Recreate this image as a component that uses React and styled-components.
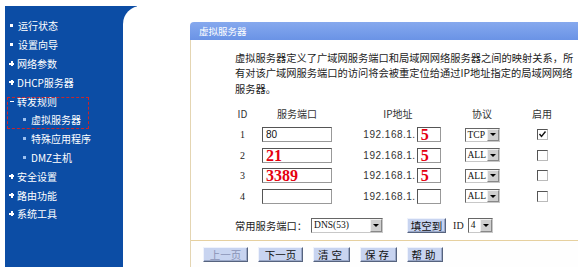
import React from 'react';
import styled, { createGlobalStyle } from 'styled-components';

const Global = createGlobalStyle`
  html, body { margin: 0; padding: 0; background: #fff; }
  body {
    width: 587px; height: 267px; overflow: hidden;
    font-family: "Noto Sans CJK SC", "Noto Sans", sans-serif;
  }
`;

const Page = styled.div`
  display: flex;
  height: 267px;
  box-sizing: border-box;
  padding: 6px 0 0 5px;
`;

const Sidebar = styled.nav`
  flex: none;
  width: 132px;
  height: 261px;
  background: #0c4da5;
  padding-top: 10.6px;
  box-sizing: border-box;
`;

const MenuItem = styled.div`
  display: flex;
  align-items: center;
  height: 18.8px;
  padding-left: ${p => (p.$sub ? 17 : 4)}px;
  color: #fff;
  font-size: 10px;
  white-space: nowrap;
`;

const Bullet = styled.span`
  position: relative;
  flex: none;
  width: 4px;
  height: 4px;
  margin-right: 4px;
  ${p => p.$kind === 'dot' && `
    background: ${p.$light ? '#9cc0f0' : '#fff'};
    width: 3px; height: 3px; margin-right: 5px; margin-left: 1px;
  `}
  ${p => p.$kind === 'plus' && `
    background:
      linear-gradient(#fff, #fff) center / 5px 2px no-repeat,
      linear-gradient(#fff, #fff) center / 2px 5px no-repeat;
    width: 5px; height: 5px; margin-right: 3px;
  `}
  ${p => p.$kind === 'minus' && `
    background: linear-gradient(#fff, #fff) center / 4px 1px no-repeat;
    width: 5px; height: 5px; margin-right: 3px;
  `}
`;

const Marked = styled.div`
  position: relative;
  &::after {
    content: '';
    position: absolute;
    left: 2px;
    top: 4.8px;
    width: 82px;
    height: 32px;
    box-sizing: border-box;
    border: 1px dashed #c8242c;
    pointer-events: none;
  }
`;

const Main = styled.main`
  flex: 1;
  margin-left: -14px;
  background: #fff;
  border-top-left-radius: 18px;
  padding: 16px 0 0 67px;
  box-sizing: border-box;
`;

const Panel = styled.section`
  width: 388px;
  height: 245px;
  display: flex;
  flex-direction: column;
`;

const PanelHeader = styled.div`
  height: 18px;
  flex: none;
  background: linear-gradient(#86a9ee, #6a93e6);
  border-radius: 4px 0 0 0;
  color: #fff;
  font-size: 9.5px;
  line-height: 18px;
  padding-left: 9px;
`;

const PanelBody = styled.div`
  flex: 1;
  display: flex;
  flex-direction: column;
  border-left: 1px solid #e4d5b2;
`;

const Content = styled.div`
  height: 200px;
  box-sizing: border-box;
  padding: 9.75px 0 0 44px;
`;

const Intro = styled.p`
  margin: 0;
  font-size: 10.25px;
  line-height: 15.5px;
  color: #222;
  white-space: nowrap;
`;

const Table = styled.div`
  display: grid;
  grid-template-columns: 15px 94px 108px 60px 60px;
  grid-auto-rows: 20.6px;
  align-items: center;
  justify-items: center;
  margin-top: 7.45px;
  color: #222;
`;

const Th = styled.div`
  font-size: 10px;
  color: #333;
`;

const Num = styled.div`
  font-family: "Liberation Serif", serif;
  font-size: 10px;
  color: #222;
`;

const TextBox = styled.div`
  width: ${p => p.$w}px;
  height: 15px;
  box-sizing: border-box;
  border: 1px solid;
  border-color: #555 #999 #999 #555;
  background: #fff;
  padding-left: 3px;
  display: flex;
  align-items: center;
  overflow: visible;
`;

const SmallVal = styled.span`
  font-family: "Liberation Sans", sans-serif;
  font-size: 10px;
  color: #111;
`;

const RedVal = styled.span`
  font-family: "Liberation Serif", serif;
  font-weight: bold;
  font-size: 16px;
  line-height: 14px;
  color: #e5000f;
  margin-top: 1px;
`;

const IpCell = styled.div`
  display: flex;
  align-items: center;
  padding-left: 8px;
`;

const IpPrefix = styled.span`
  font-family: "Liberation Sans", sans-serif;
  font-size: 10px;
  letter-spacing: 0.5px;
  color: #333;
  margin-right: 1px;
`;

const SelectBox = styled.div`
  width: ${p => p.$w}px;
  height: ${p => p.$h || 14}px;
  box-sizing: border-box;
  border: 1px solid;
  border-color: #666 #c8c8c8 #c8c8c8 #666;
  background: #fff;
  display: flex;
  align-items: center;
  justify-content: space-between;
`;

const SelectText = styled.span`
  font-family: "Liberation Serif", serif;
  font-size: 9.5px;
  color: #111;
  padding-left: 2px;
  white-space: nowrap;
`;

const SelectBtn = styled.span`
  width: 12px;
  height: 100%;
  box-sizing: border-box;
  background: #cfcfcf;
  border: 1px solid;
  border-color: #f0f0f0 #888 #888 #f0f0f0;
  display: flex;
  align-items: center;
  justify-content: center;
  &::after {
    content: '';
    border-left: 3px solid transparent;
    border-right: 3px solid transparent;
    border-top: 3px solid #000;
  }
`;

const Check = styled.div`
  width: 11px;
  height: 11px;
  box-sizing: border-box;
  border: 1px solid;
  border-color: #555 #bbb #bbb #555;
  background: #fff;
  display: flex;
  align-items: center;
  justify-content: center;
`;

const CommonRow = styled.div`
  display: flex;
  align-items: center;
  margin-top: 11.3px;
  height: 15px;
`;

const Label = styled.span`
  font-size: 10.3px;
  color: #222;
  margin-right: 4px;
`;

const Button = styled.button`
  height: 15px;
  width: ${p => p.$w}px;
  padding: 0;
  margin: 0;
  box-sizing: border-box;
  background: #c8d4f0;
  border: 1px solid;
  border-color: #eef2fc #56637e #56637e #eef2fc;
  box-shadow: inset -1px -1px 0 #9aa8c8;
  font-family: "Noto Sans CJK SC", sans-serif;
  font-size: 10.5px;
  line-height: 13px;
  color: ${p => (p.disabled ? '#8a93b6' : '#111')};
  letter-spacing: ${p => p.$ls || 0}px;
`;

const Spacer = styled.span`
  display: inline-block;
  width: ${p => p.$w}px;
`;

const IdLabel = styled.span`
  font-size: 10px;
  font-family: "Liberation Serif", serif;
  color: #222;
  margin: 0 4px 0 7px;
`;

const Footer = styled.div`
  flex: 1;
  border-top: 1px solid #e6d09f;
  display: flex;
  gap: 10px;
  padding: 6px 0 0 12px;
  background: #fefefe;
`;

const CheckMark = () => (
  <svg width="9" height="9" viewBox="0 0 9 9">
    <polyline points="1.5,4 3.5,6.5 7.5,1.5" fill="none" stroke="#111" strokeWidth="1.4" />
  </svg>
);

const Select = ({ w, h, text }) => (
  <SelectBox $w={w} $h={h}>
    <SelectText>{text}</SelectText>
    <SelectBtn />
  </SelectBox>
);

const rows = [
  { id: 1, port: '80', portRed: false, ip: '5', proto: 'TCP', on: true },
  { id: 2, port: '21', portRed: true, ip: '5', proto: 'ALL', on: false },
  { id: 3, port: '3389', portRed: true, ip: '5', proto: 'ALL', on: false },
  { id: 4, port: '', portRed: false, ip: '', proto: 'ALL', on: false },
];

export default function App() {
  return (
    <>
      <Global />
      <Page>
        <Sidebar>
          <MenuItem><Bullet $kind="dot" />运行状态</MenuItem>
          <MenuItem><Bullet $kind="dot" />设置向导</MenuItem>
          <MenuItem><Bullet $kind="plus" />网络参数</MenuItem>
          <MenuItem><Bullet $kind="plus" />DHCP服务器</MenuItem>
          <Marked>
            <MenuItem><Bullet $kind="minus" />转发规则</MenuItem>
            <MenuItem $sub><Bullet $kind="dot" $light />虚拟服务器</MenuItem>
          </Marked>
          <MenuItem $sub><Bullet $kind="dot" $light />特殊应用程序</MenuItem>
          <MenuItem $sub><Bullet $kind="dot" $light />DMZ主机</MenuItem>
          <MenuItem><Bullet $kind="plus" />安全设置</MenuItem>
          <MenuItem><Bullet $kind="plus" />路由功能</MenuItem>
          <MenuItem><Bullet $kind="plus" />系统工具</MenuItem>
        </Sidebar>
        <Main>
          <Panel>
            <PanelHeader>虚拟服务器</PanelHeader>
            <PanelBody>
              <Content>
                <Intro>
                  虚拟服务器定义了广域网服务端口和局域网网络服务器之间的映射关系，所<br />
                  有对该广域网服务端口的访问将会被重定位给通过IP地址指定的局域网网络<br />
                  服务器。
                </Intro>
                <Table>
                  <Th>ID</Th>
                  <Th>服务端口</Th>
                  <Th>IP地址</Th>
                  <Th>协议</Th>
                  <Th>启用</Th>
                  {rows.map(r => (
                    <React.Fragment key={r.id}>
                      <Num>{r.id}</Num>
                      <TextBox $w={70}>
                        {r.portRed ? <RedVal>{r.port}</RedVal> : <SmallVal>{r.port}</SmallVal>}
                      </TextBox>
                      <IpCell>
                        <IpPrefix>192.168.1.</IpPrefix>
                        <TextBox $w={24}>{r.ip && <RedVal>{r.ip}</RedVal>}</TextBox>
                      </IpCell>
                      <Select w={35} text={r.proto} />
                      <Check>{r.on && <CheckMark />}</Check>
                    </React.Fragment>
                  ))}
                </Table>
                <CommonRow>
                  <Label>常用服务端口：</Label>
                  <Select w={72} h={15} text="DNS(53)" />
                  <Spacer $w={24} />
                  <Button $w={39}>填空到</Button>
                  <IdLabel>ID</IdLabel>
                  <Select w={25} h={15} text="4" />
                </CommonRow>
              </Content>
              <Footer>
                <Button $w={45} disabled>上一页</Button>
                <Button $w={45}>下一页</Button>
                <Button $w={37} $ls={3}>清空</Button>
                <Button $w={37} $ls={3}>保存</Button>
                <Button $w={36} $ls={3}>帮助</Button>
              </Footer>
            </PanelBody>
          </Panel>
        </Main>
      </Page>
    </>
  );
}
